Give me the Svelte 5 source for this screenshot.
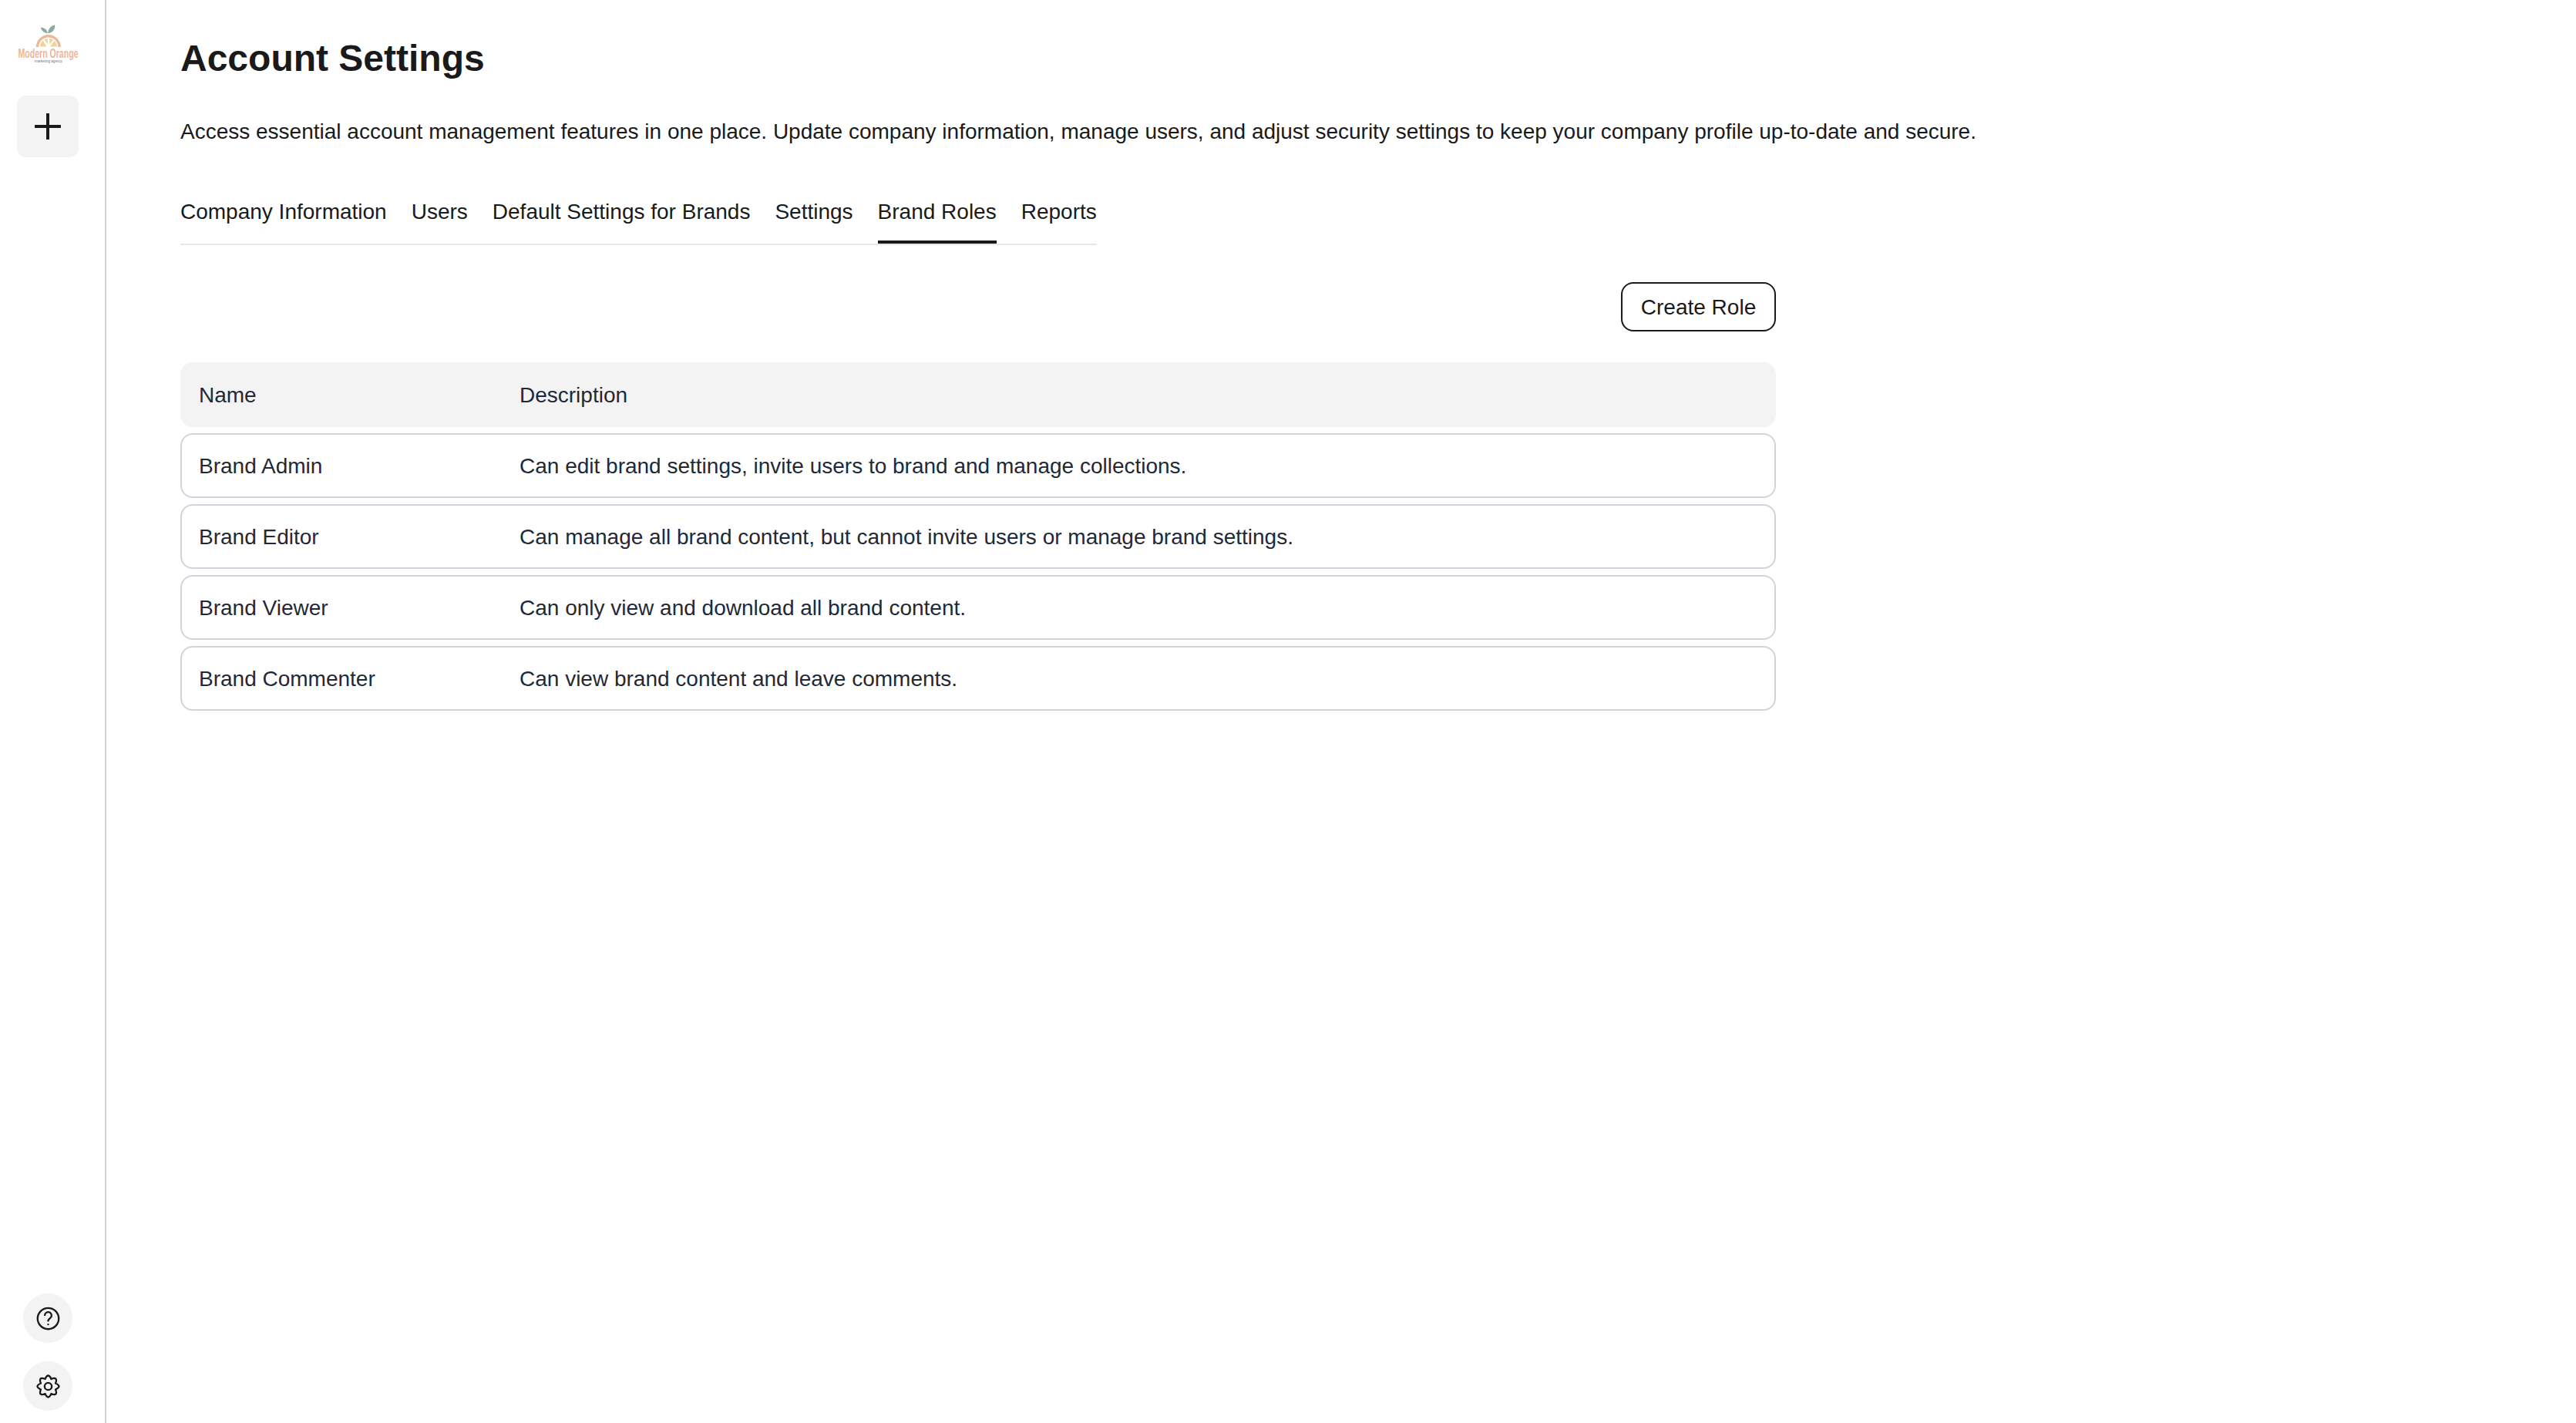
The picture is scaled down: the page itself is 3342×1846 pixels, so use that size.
<script>
  const tabs = ['Company Information', 'Users', 'Default Settings for Brands', 'Settings', 'Brand Roles', 'Reports'];
  const roles = [
    ['Brand Admin', 'Can edit brand settings, invite users to brand and manage collections.'],
    ['Brand Editor', 'Can manage all brand content, but cannot invite users or manage brand settings.'],
    ['Brand Viewer', 'Can only view and download all brand content.'],
    ['Brand Commenter', 'Can view brand content and leave comments.']
  ];

  const polar = (r, deg) => {
    const a = (deg * Math.PI) / 180;
    return `${(12 + r * Math.cos(a)).toFixed(2)} ${(12 + r * Math.sin(a)).toFixed(2)}`;
  };
  let gear = `M${polar(7.1, -112.5)}`;
  for (let i = 0; i < 8; i++) {
    const a = -90 + i * 45;
    gear += `Q${polar(12.6, a)} ${polar(7.1, a + 22.5)}`;
  }
  gear += 'Z';
</script>

<div class="page">
  <aside class="sidebar">
    <svg class="logo" viewBox="0 0 80 54" width="80" height="54" aria-label="Modern Orange logo">
      <path d="M39.7 13.3C34.5 12.5 31.5 9.5 31 5.5C35.5 6 39.5 8.5 39.7 13.3Z" fill="#8fa9a0"/>
      <path d="M40.3 13.3C40.3 8 43.5 3.8 49.3 2.3C49.6 8 46.5 12.5 40.3 13.3Z" fill="#8fa9a0"/>
      <path d="M26.5 31A14.3 14.3 0 0 1 55.1 31" fill="none" stroke="#ecb79a" stroke-width="3.4"/>
      <path d="M30 30.6A11 11 0 0 1 33.8 22.6L38.6 30.6Z" fill="#ecd596"/>
      <path d="M35.5 21.3A11 11 0 0 1 39.6 20L40 27.8Z" fill="#ecd596"/>
      <path d="M42 20A11 11 0 0 1 47 21.5L42.6 27.8Z" fill="#ecd596"/>
      <path d="M48.5 22.8A11 11 0 0 1 52 30.6L43 30.6Z" fill="#ecd596"/>
      <text class="logo-name" text-anchor="middle" transform="translate(40.5 45) scale(0.66 1)">Modern Orange</text>
      <text class="logo-sub" x="41" y="50.5" text-anchor="middle">marketing agency</text>
    </svg>
    <button class="add" aria-label="Add">
      <svg viewBox="0 0 34 34" width="34" height="34"><path d="M17 1V33M1 17H33" stroke="#1a1a1a" stroke-width="4" stroke-linecap="round" fill="none"/></svg>
    </button>
    <div class="bottom">
      <button class="round" aria-label="Help">
        <svg viewBox="0 0 24 24" width="35" height="35" fill="none" stroke="#1a1a1a" stroke-width="1.6" stroke-linecap="round" stroke-linejoin="round">
          <circle cx="12" cy="12" r="9.4"/>
          <path d="M9 9a3 3 0 0 1 6 .6c0 2-3 2.6-3 4.4"/>
          <path d="M12 17.2h.01"/>
        </svg>
      </button>
      <button class="round" aria-label="Settings">
        <svg viewBox="0 0 24 24" width="35" height="35" fill="none" stroke="#1a1a1a" stroke-width="1.6" stroke-linecap="round" stroke-linejoin="round">
          <path d={gear}/>
          <circle cx="12" cy="12" r="3.2"/>
        </svg>
      </button>
    </div>
  </aside>

  <main class="main">
    <h1>Account Settings</h1>
    <p class="intro">Access essential account management features in one place. Update company information, manage users, and adjust security settings to keep your company profile up-to-date and secure.</p>

    <nav class="tabs">
      {#each tabs as tab}
        <span class="tab" class:active={tab === 'Brand Roles'}>{tab}</span>
      {/each}
    </nav>

    <section class="content">
      <div class="actions">
        <button class="create">Create Role</button>
      </div>
      <div class="table">
        <div class="row head">
          <span class="name">Name</span>
          <span>Description</span>
        </div>
        {#each roles as [name, description]}
          <div class="row">
            <span class="name">{name}</span>
            <span>{description}</span>
          </div>
        {/each}
      </div>
    </section>
  </main>
</div>

<style>
  :global(body) {
    margin: 0;
    background: #fff;
  }
  .page {
    display: flex;
    width: 3342px;
    height: 1846px;
    overflow: hidden;
    font-family: "Liberation Sans", Arial, sans-serif;
    color: #1a1a1a;
  }
  .sidebar {
    box-sizing: border-box;
    width: 138px;
    flex: none;
    border-right: 2px solid #d1d5db;
    display: flex;
    flex-direction: column;
    align-items: center;
    padding: 30px 12px 16px 0;
  }
  .logo { display: block; flex: none; }
  .logo-name {
    font-family: "Liberation Sans", Arial, sans-serif;
    font-size: 16px;
    font-weight: 700;
    fill: #ecb79a;
  }
  .logo-sub {
    font-family: "Liberation Sans", Arial, sans-serif;
    font-size: 4.6px;
    fill: #77777d;
  }
  button {
    font-family: inherit;
    padding: 0;
    margin: 0;
    cursor: pointer;
  }
  .add {
    width: 80px;
    height: 80px;
    margin-top: 40px;
    border: 0;
    border-radius: 12px;
    background: #f3f3f3;
    display: flex;
    align-items: center;
    justify-content: center;
  }
  .bottom {
    margin-top: auto;
    display: flex;
    flex-direction: column;
    gap: 24px;
  }
  .round {
    width: 64px;
    height: 64px;
    border: 0;
    border-radius: 50%;
    background: #f3f3f3;
    display: flex;
    align-items: center;
    justify-content: center;
  }
  .main {
    flex: 1;
    padding: 41px 0 0 96px;
    min-width: 0;
  }
  h1 {
    margin: 0;
    font-size: 48px;
    line-height: 70px;
    font-weight: 700;
    color: #1a1a1a;
  }
  .intro {
    margin: 40px 0 0;
    font-size: 28px;
    line-height: 40px;
    color: #1a1a1a;
  }
  .tabs {
    display: inline-flex;
    gap: 32px;
    margin-top: 56px;
    border-bottom: 2px solid #e5e7eb;
    font-size: 28px;
    line-height: 40px;
  }
  .tab {
    padding: 8px 0 17px;
    border-bottom: 4px solid transparent;
  }
  .tab.active { border-bottom-color: #1a1a1a; }
  .content {
    width: 2070px;
    margin-top: 48px;
  }
  .actions {
    display: flex;
    justify-content: flex-end;
  }
  .create {
    box-sizing: border-box;
    width: 201px;
    height: 64px;
    border: 2px solid #1a1a1a;
    border-radius: 16px;
    background: #fff;
    color: #1a1a1a;
    font-size: 28px;
    padding-top: 1px;
  }
  .table {
    margin-top: 40px;
    display: flex;
    flex-direction: column;
    gap: 8px;
    font-size: 28px;
    color: #1f2937;
  }
  .row {
    box-sizing: border-box;
    height: 84px;
    border: 2px solid #d1d5db;
    border-radius: 16px;
    display: flex;
    align-items: center;
    padding: 1px 22px 0;
  }
  .row.head {
    border: 0;
    padding: 1px 24px 0;
    background: #f3f3f3;
  }
  .name { width: 416px; flex: none; }
</style>
